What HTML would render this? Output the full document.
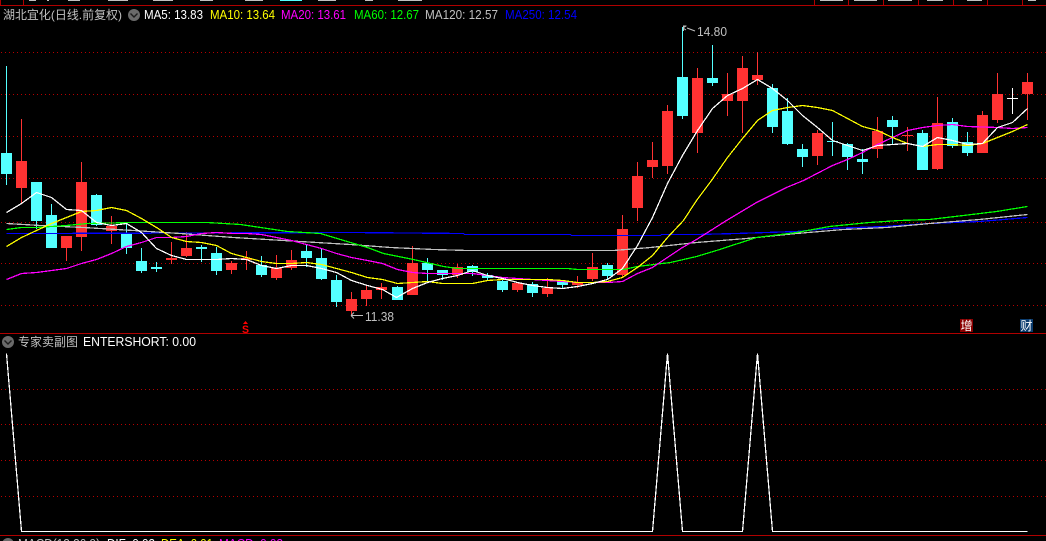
<!DOCTYPE html>
<html lang="zh">
<head>
<meta charset="utf-8">
<title>湖北宜化</title>
<style>
html,body{margin:0;padding:0;background:#000;width:1046px;height:541px;overflow:hidden}
svg{display:block}
text{font-family:"Liberation Sans","Noto Sans CJK SC",sans-serif;font-size:13px}
.l{fill:none;stroke-width:1.25;shape-rendering:crispEdges}
</style>
</head>
<body>
<svg width="1046" height="541" viewBox="0 0 1046 541" xmlns="http://www.w3.org/2000/svg">
<rect width="1046" height="541" fill="#000"/>
<!-- grid -->
<g stroke="#b80000" stroke-width="1" stroke-dasharray="1 3" shape-rendering="crispEdges">
<path d="M1 52.5H1046M1 94.5H1046M1 136.5H1046M1 178.5H1046M1 222.5H1046M1 263.5H1046M1 305.5H1046M1 389.5H1046M1 424.5H1046M1 460.5H1046M1 496.5H1046"/>
</g>
<!-- frame -->
<g fill="#b00000" shape-rendering="crispEdges">
<rect x="0" y="5" width="1046" height="1"/>
<rect x="0" y="333" width="1046" height="1"/>
<rect x="0" y="535" width="1046" height="1"/>
<rect x="0" y="0" width="1" height="5"/><rect x="23" y="0" width="1" height="5"/>
<rect x="814" y="0" width="1" height="5"/><rect x="848" y="0" width="1" height="5"/><rect x="883" y="0" width="1" height="5"/><rect x="918" y="0" width="1" height="5"/><rect x="953" y="0" width="1" height="5"/><rect x="987" y="0" width="1" height="5"/><rect x="1022" y="0" width="1" height="5"/>
</g>
<g fill="#c0c0c0" shape-rendering="crispEdges">
<rect x="29" y="0" width="7" height="1"/><rect x="47" y="0" width="2" height="1"/><rect x="68" y="0" width="12" height="1"/><rect x="108" y="0" width="20" height="1"/><rect x="153" y="0" width="20" height="1"/><rect x="200" y="0" width="13" height="1"/><rect x="245" y="0" width="18" height="1"/><rect x="318" y="0" width="18" height="1"/><rect x="365" y="0" width="8" height="1"/><rect x="398" y="0" width="24" height="1"/>
<rect x="820" y="0" width="23" height="1"/><rect x="854" y="0" width="23" height="1"/><rect x="888" y="0" width="24" height="1"/><rect x="927" y="0" width="16" height="1"/><rect x="967" y="0" width="15" height="1"/><rect x="1028" y="0" width="8" height="1"/>
</g>
<g fill="#54ffff" shape-rendering="crispEdges"><rect x="280" y="0" width="22" height="1"/></g>
<!-- candles cyan -->
<path shape-rendering="crispEdges" fill="#54ffff" d="M6 66h1V185h-1zM1 153h11V174h-11zM36 182h1V229h-1zM31 182h11V221h-11zM51 204h1V248h-1zM46 215h11V248h-11zM96 194h1V226h-1zM91 195h11V225h-11zM126 223h1V254h-1zM121 233h11V248h-11zM141 248h1V273h-1zM136 261h11V271h-11zM156 262h1V272h-1zM151 267h11V269h-11zM201 245h1V262h-1zM196 247h11V249h-11zM216 247h1V275h-1zM211 253h11V271h-11zM261 256h1V277h-1zM256 265h11V275h-11zM306 244h1V267h-1zM301 251h11V258h-11zM321 248h1V280h-1zM316 258h11V279h-11zM336 275h1V307h-1zM331 280h11V302h-11zM397 286h1V300h-1zM392 287h11V300h-11zM427 258h1V281h-1zM422 263h11V270h-11zM442 270h1V280h-1zM437 270h11V275h-11zM472 265h1V276h-1zM467 266h11V272h-11zM487 273h1V280h-1zM482 275h11V278h-11zM502 280h1V292h-1zM497 281h11V290h-11zM532 282h1V297h-1zM527 284h11V293h-11zM562 281h1V289h-1zM557 282h11V285h-11zM607 263h1V280h-1zM602 265h11V276h-11zM682 27h1V119h-1zM677 77h11V116h-11zM712 45h1V86h-1zM707 78h11V83h-11zM772 84h1V133h-1zM767 88h11V127h-11zM787 98h1V145h-1zM782 111h11V144h-11zM802 144h1V167h-1zM797 149h11V157h-11zM832 122h1V156h-1zM827 141h11V142h-11zM847 143h1V170h-1zM842 144h11V157h-11zM862 149h1V174h-1zM857 159h11V162h-11zM892 116h1V144h-1zM887 120h11V127h-11zM922 130h1V170h-1zM917 133h11V170h-11zM952 118h1V148h-1zM947 122h11V146h-11zM967 132h1V156h-1zM962 142h11V153h-11z"/>
<!-- candles red -->
<path shape-rendering="crispEdges" fill="#ff3232" d="M21 119h1V203h-1zM16 161h11V188h-11zM66 236h1V261h-1zM61 236h11V248h-11zM81 162h1V251h-1zM76 182h11V237h-11zM111 216h1V244h-1zM106 226h11V231h-11zM171 242h1V264h-1zM166 258h11V260h-11zM186 232h1V257h-1zM181 248h11V256h-11zM231 261h1V274h-1zM226 263h11V270h-11zM246 251h1V270h-1zM241 258h11V260h-11zM276 255h1V280h-1zM271 268h11V278h-11zM291 250h1V270h-1zM286 260h11V268h-11zM351 292h1V315h-1zM346 299h11V311h-11zM366 286h1V306h-1zM361 290h11V299h-11zM381 283h1V299h-1zM376 287h11V290h-11zM412 246h1V295h-1zM407 263h11V295h-11zM457 264h1V278h-1zM452 267h11V275h-11zM517 283h1V292h-1zM512 283h11V290h-11zM547 278h1V297h-1zM542 288h11V294h-11zM577 276h1V288h-1zM572 282h11V285h-11zM592 253h1V281h-1zM587 267h11V279h-11zM622 215h1V277h-1zM617 229h11V275h-11zM637 162h1V221h-1zM632 176h11V208h-11zM652 142h1V178h-1zM647 160h11V167h-11zM667 105h1V174h-1zM662 111h11V166h-11zM697 68h1V153h-1zM692 78h11V133h-11zM727 73h1V116h-1zM722 94h11V101h-11zM742 56h1V133h-1zM737 68h11V101h-11zM757 52h1V85h-1zM752 75h11V80h-11zM817 130h1V165h-1zM812 133h11V156h-11zM877 117h1V158h-1zM872 131h11V149h-11zM907 127h1V151h-1zM902 135h11V136h-11zM937 97h1V170h-1zM932 123h11V169h-11zM982 111h1V153h-1zM977 115h11V153h-11zM997 73h1V123h-1zM992 94h11V120h-11zM1027 73h1V120h-1zM1022 82h11V94h-11z"/>
<path shape-rendering="crispEdges" fill="#fff" d="M1012 88h1V114h-1zM1007 98h11V99h-11z"/>
<!-- MA lines -->
<g transform="translate(.5 .5)">
<polyline class="l" stroke="#0000ff" points="6,233 33,233 350,232 463,233 464,234 570,234 571,235 660,235 661,234 696,234 736,233 796,231 829,228 883,226 929,223 979,221 1027,217"/>
<polyline class="l" stroke="#c0c0c0" points="6,223 40,225 83,227 133,230 180,233 233,237 283,240 333,243 350,244 390,247 433,249 467,250 613,250 650,247 696,242 746,238 796,233 843,229 886,227 929,223 979,219 1027,214"/>
<polyline class="l" stroke="#00ff00" points="6,229 21,227 36,227 66,225 87,223 133,222 207,222 240,224 287,231 320,233 350,242 367,247 383,253 413,259 443,266 457,268 567,268 577,269 623,269 637,266 670,262 696,256 716,250 756,237 796,232 829,226 869,222 899,220 929,219 963,215 996,211 1027,206"/>
<polyline class="l" stroke="#ff00ff" points="6,279 21,273 36,272 51,270 66,268 81,263 96,259 111,253 126,246 141,242 156,237 171,237 186,236 201,233 216,232 233,233 246,233 261,234 276,237 291,240 306,244 321,248 336,253 351,257 367,260 382,263 397,269 412,272 427,273 442,273 457,273 472,273 487,275 502,277 517,278 532,279 547,280 562,281 577,282 592,282 607,282 622,281 637,273 652,267 667,257 682,247 696,239 726,220 756,202 786,187 803,180 832,165 847,159 862,152 877,144 892,137 907,130 922,127 937,125 952,124 967,126 997,127 1012,128 1027,127"/>
<polyline class="l" stroke="#ffff00" points="6,246 21,237 36,230 51,223 66,217 81,211 96,210 111,207 126,210 141,218 156,227 171,237 186,241 201,242 216,245 231,253 246,257 261,261 276,263 291,263 306,262 321,264 336,268 351,272 367,277 382,279 397,283 412,282 427,281 442,283 457,283 472,283 487,280 502,279 517,279 532,279 547,279 562,280 577,282 592,282 607,281 622,277 637,267 652,255 667,237 683,220 696,200 711,180 727,157 742,138 757,120 772,110 787,107 802,105 817,107 832,110 847,118 862,126 877,130 892,137 907,143 922,146 937,144 952,144 967,145 982,143 997,137 1012,131 1027,124"/>
<polyline class="l" stroke="#ffffff" points="6,212 21,203 36,192 51,197 66,209 81,210 96,222 111,225 126,223 141,232 156,248 171,255 186,259 201,259 216,259 231,258 246,259 261,265 276,268 291,265 306,265 321,268 336,272 351,280 367,285 382,289 396,297 412,288 427,282 442,278 457,275 472,270 487,275 502,278 517,282 532,285 547,287 562,288 577,286 592,283 607,279 622,268 637,245 652,217 667,183 682,155 697,130 712,108 727,95 742,88 757,79 772,88 787,100 802,115 817,127 832,140 847,145 862,150 877,145 892,144 907,143 922,146 937,137 952,140 967,144 982,143 997,127 1012,122 1027,108"/>
<!-- lower pane line -->
<polyline class="l" stroke="#ffffff" points="6,353 21,531 652,531 667,353 682,531 742,531 757,353 772,531 1027,531"/>
</g>
<!-- markers -->
<path d="M683.5 31V26h3M683 28l3-2M683 28l3 2M687 28l8 3" fill="none" stroke="#c0c0c0" stroke-width="1"/>
<text x="697" y="36" fill="#c0c0c0" textLength="30" lengthAdjust="spacingAndGlyphs">14.80</text>
<path d="M351 315.5H363M351 315.5l3-3M351 315.5l3 3" fill="none" stroke="#c0c0c0" stroke-width="1"/>
<text x="365" y="321" fill="#c0c0c0" textLength="29" lengthAdjust="spacingAndGlyphs">11.38</text>
<path d="M245.5 321l2.5 3h-5z" fill="#ff0000"/>
<text x="242" y="333" fill="#ff0000" textLength="7" lengthAdjust="spacingAndGlyphs" style="font-size:11px;font-weight:bold">S</text>
<rect x="960" y="319" width="13" height="13" fill="#8a0000"/>
<text x="960.5" y="330" fill="#fff" style="font-size:12px">增</text>
<rect x="1020" y="319" width="13" height="13" fill="#0b3c6e"/>
<text x="1020.5" y="330" fill="#fff" style="font-size:12px">财</text>
<!-- header row -->
<text x="3" y="19" fill="#c0c0c0" textLength="119" lengthAdjust="spacingAndGlyphs" style="font-size:12px">湖北宜化(日线.前复权)</text>
<circle cx="134" cy="15" r="6" fill="#6a6a6a"/>
<path d="M130.5 13.5l3.5 3.5 3.5-3.5" fill="none" stroke="#1c1c1c" stroke-width="1.4"/>
<text x="144" y="19" fill="#ffffff" textLength="59" lengthAdjust="spacingAndGlyphs">MA5: 13.83</text>
<text x="210" y="19" fill="#ffff00" textLength="65" lengthAdjust="spacingAndGlyphs">MA10: 13.64</text>
<text x="281" y="19" fill="#ff00ff" textLength="65" lengthAdjust="spacingAndGlyphs">MA20: 13.61</text>
<text x="354" y="19" fill="#00ff00" textLength="65" lengthAdjust="spacingAndGlyphs">MA60: 12.67</text>
<text x="425" y="19" fill="#c0c0c0" textLength="73" lengthAdjust="spacingAndGlyphs">MA120: 12.57</text>
<text x="505" y="19" fill="#0000ff" textLength="72" lengthAdjust="spacingAndGlyphs">MA250: 12.54</text>
<!-- sub pane header -->
<circle cx="8" cy="342" r="6" fill="#6a6a6a"/>
<path d="M4.5 340.5l3.5 3.5 3.5-3.5" fill="none" stroke="#1c1c1c" stroke-width="1.4"/>
<text x="18" y="346" fill="#c0c0c0" textLength="60" lengthAdjust="spacingAndGlyphs" style="font-size:12px">专家卖副图</text>
<text x="83" y="346" fill="#ffffff" textLength="113" lengthAdjust="spacingAndGlyphs">ENTERSHORT: 0.00</text>
<!-- bottom pane header (clipped) -->
<circle cx="8" cy="544" r="6" fill="#6a6a6a"/>
<text x="18" y="548" fill="#c0c0c0" textLength="82" lengthAdjust="spacingAndGlyphs">MACD(12,26,9)</text>
<text x="107" y="548" fill="#ffffff" textLength="48" lengthAdjust="spacingAndGlyphs">DIF: 0.03</text>
<text x="161" y="548" fill="#ffff00" textLength="52" lengthAdjust="spacingAndGlyphs">DEA: 0.01</text>
<text x="219" y="548" fill="#ff00ff" textLength="64" lengthAdjust="spacingAndGlyphs">MACD: 0.03</text>
</svg>
</body>
</html>
